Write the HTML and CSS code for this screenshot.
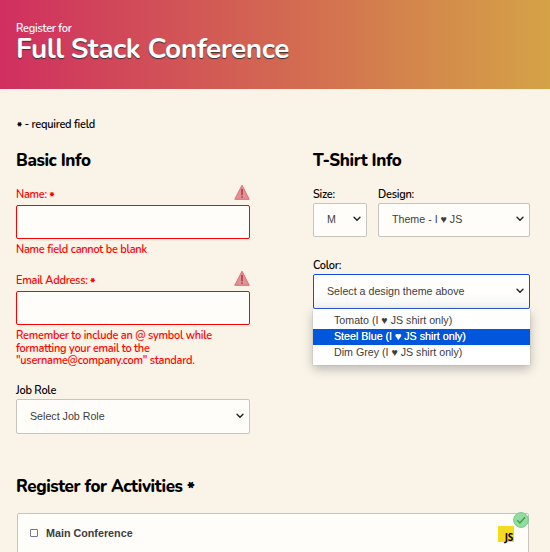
FILE: index.html
```html
<!DOCTYPE html>
<html lang="en">
<head>
<meta charset="utf-8">
<title>Full Stack Conference</title>
<link rel="stylesheet" href="styles.css">
</head>
<body>
<svg class="defs" aria-hidden="true">
  <symbol id="chevron" viewBox="0 0 8 6"><path d="M1 1.2 4 4.2 7 1.2" fill="none" stroke="currentColor" stroke-width="1.4" stroke-linecap="round" stroke-linejoin="round"/></symbol>
  <symbol id="warning" viewBox="0 0 16 16"><path d="M8 1.2 15.2 15.3H.8Z" fill="#dc9499" stroke="#ec6572" stroke-width="1"/><path d="M8 5v6.3M8 12.2v1.5" stroke="#ad2431" stroke-width="1.3"/></symbol>
</svg>
<header class="banner">
  <p class="intro">Register for</p>
  <h1>Full Stack Conference</h1>
</header>
<form>
  <p class="note"><span class="star">*</span> - required field</p>
  <div class="columns">
    <section class="basic">
      <h2>Basic Info</h2>
      <div class="field invalid name">
        <label for="name">Name: <span class="star">*</span></label>
        <svg class="warn"><use href="#warning"/></svg>
        <input id="name" type="text">
        <p class="hint">Name field cannot be blank</p>
      </div>
      <div class="field invalid email">
        <label for="email">Email Address: <span class="star">*</span></label>
        <svg class="warn"><use href="#warning"/></svg>
        <input id="email" type="text">
        <p class="hint">Remember to include an @ symbol while<br>formatting your email to the<br>"username@company.com" standard.</p>
      </div>
      <div class="field">
        <label>Job Role</label>
        <div class="select tall">Select Job Role<svg class="chev"><use href="#chevron"/></svg></div>
      </div>
    </section>
    <section class="shirt">
      <h2>T-Shirt Info</h2>
      <div class="pair">
        <div class="field">
          <label>Size:</label>
          <div class="select">M<svg class="chev"><use href="#chevron"/></svg></div>
        </div>
        <div class="field">
          <label>Design:</label>
          <div class="select">Theme - I ♥ JS<svg class="chev"><use href="#chevron"/></svg></div>
        </div>
      </div>
      <div class="field color">
        <label>Color:</label>
        <div class="select tall open">Select a design theme above<svg class="chev"><use href="#chevron"/></svg></div>
        <ul class="menu">
          <li>Tomato (I ♥ JS shirt only)</li>
          <li class="active">Steel Blue (I ♥ JS shirt only)</li>
          <li>Dim Grey (I ♥ JS shirt only)</li>
        </ul>
      </div>
    </section>
  </div>
  <section class="activities">
    <h2>Register for Activities <span class="star">*</span></h2>
    <div class="activity">
      <span class="box"></span>
      <span class="title">Main Conference</span>
      <span class="js">JS</span>
      <svg class="valid" viewBox="0 0 16 16"><circle cx="8" cy="8" r="7.4" fill="#94dba0" stroke="#79c987"/><path d="m4.3 8.3 2.6 2.6 5-5.6" fill="none" stroke="#399f51" stroke-width="1.4"/></svg>
    </div>
  </section>
</form>
</body>
</html>
```
FILE: styles.css
```css
* { box-sizing: border-box; }
html { height: 552px; overflow: hidden; }
body {
  margin: 0;
  height: 552px;
  overflow: hidden;
  background: #f9f3e8;
  color: #000;
  font: 600 11px/14px Nunito, Lato, sans-serif;
  letter-spacing: -.25px;
}
p, h1, h2, ul { margin: 0; padding: 0; }
.defs { display: none; }
.banner {
  height: 89px;
  padding: 22px 16px 0;
  color: #fff;
  background: linear-gradient(90deg, #d02f60, #d14c58 25%, #d36b51 54%, #d3854c 74%, #d5a247);
}
h1 {
  font-size: 28px;
  line-height: 27px;
  font-weight: 700;
  letter-spacing: -.45px;
  text-shadow: 0 1px 1px #333;
}
form { padding: 29px 20px 0 16px; }
.note { line-height: 14px; padding-left: 1px; }
.star { font-weight: 900; vertical-align: -2px; line-height: 0; }
.columns {
  display: grid;
  grid-template-columns: 234px 217px;
  column-gap: 63px;
  padding-top: 18px;
}
h2 { font-size: 17px; line-height: 22px; font-weight: 800; letter-spacing: -.4px; }
.basic h2, .shirt h2 { margin-bottom: 15px; }
.field { position: relative; }
label { display: block; height: 16px; line-height: 16px; }
.invalid { color: #f00; }
.invalid label { height: 18px; }
.warn { position: absolute; right: 0; top: -3px; width: 16px; height: 16px; }
input {
  display: block;
  width: 100%;
  height: 34px;
  border: 1px solid #f00;
  border-radius: 2px;
  background: #fffdf9;
}
.hint { padding-top: 5px; line-height: 12.5px; white-space: nowrap; }
.name { height: 86px; }
.email { height: 110px; }
.select {
  display: flex;
  align-items: center;
  justify-content: space-between;
  height: 34px;
  padding: 0 5px 2px 13px;
  border: 1px solid #c8c4bd;
  border-radius: 2px;
  background: #fffdf9;
  color: #3d3d3d;
  font: 10.67px/14px "Liberation Sans", Arial, sans-serif;
  letter-spacing: 0;
}
.tall { height: 35px; }
.chev { width: 8px; height: 6px; color: #222; flex: none; }
.pair { display: grid; grid-template-columns: 54px 152px; gap: 11px; }
.color { margin-top: 21px; }
.open { border-color: #1448f0; background: linear-gradient(#fffefc 50%, #f5f5f5); }
.menu {
  position: absolute;
  top: 51px;
  left: 0;
  width: 100%;
  height: 56px;
  padding-top: 4px;
  list-style: none;
  background: #fff;
  color: #3d3d3d;
  font: 10.67px/15px "Liberation Sans", Arial, sans-serif;
  letter-spacing: 0;
  box-shadow: 0 0 1px #999, 0 4px 10px rgba(0, 0, 0, .25);
}
.menu li { height: 16px; padding-left: 21px; }
.menu .active { background: #0057dc; color: #fff; text-shadow: 0 0 .4px #fff; }
.activities { padding-top: 42px; }
.activity {
  position: relative;
  display: flex;
  align-items: center;
  height: 60px;
  margin: 15px 1px 0;
  padding: 0 14px 20px 12px;
  border: 1px solid #c8c4bd;
  border-radius: 2px;
  background: #fffdf9;
}
.box { width: 8px; height: 8px; border: 1px solid #77778b; border-radius: 1px; background: #fff; }
.title { margin-left: 8px; color: #3d3d3d; font: bold 10.75px/14px "Liberation Sans", Arial, sans-serif; letter-spacing: 0; }
.js {
  width: 16px;
  height: 16px;
  margin: 2px 0 0 auto;
  padding: 5px 1px 0 0;
  background: #f4db22;
  color: #000;
  font: 700 10px/12px "Open Sans", sans-serif;
  text-align: right;
}
.valid { position: absolute; top: -2px; right: -1px; width: 16px; height: 16px; }
```
